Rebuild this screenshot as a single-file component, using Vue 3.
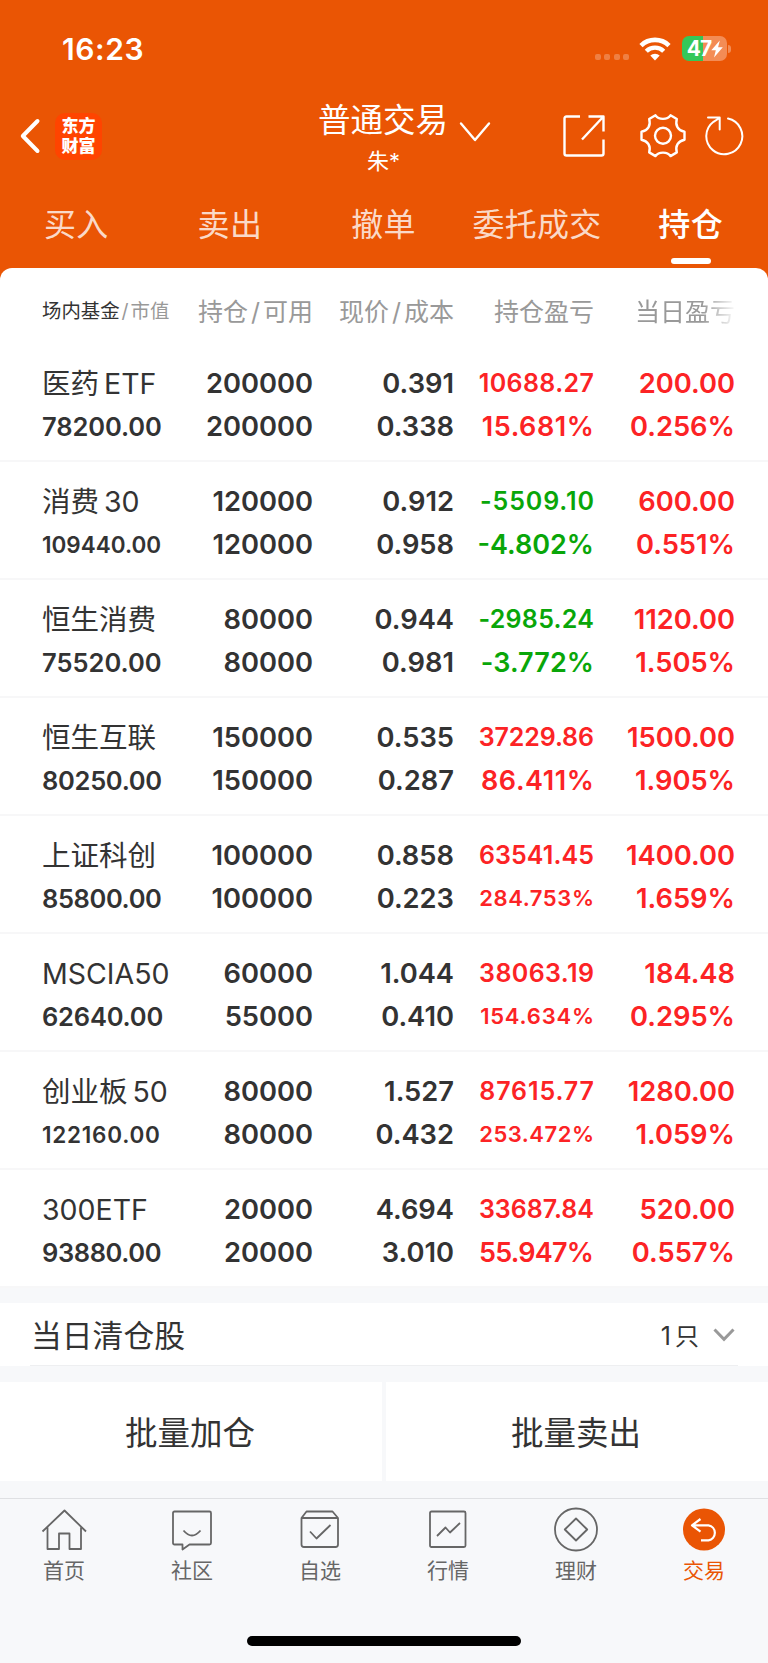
<template>
  <div class="pantalla">
    <header class="cabecera">
      <div class="estado">
        <span class="hora">16:23</span>
        <div class="indicadores">
          <div class="senal"><i v-for="n in 4" :key="n"></i></div>
          <svg class="wifi" width="32" height="24" viewBox="0 0 32 24">
            <path d="M2 8.6a20 20 0 0 1 28 0" fill="none" stroke="#fff" stroke-width="4.6" />
            <path d="M7.3 14.2a12.4 12.4 0 0 1 17.4 0" fill="none" stroke="#fff" stroke-width="4.4" />
            <path d="M11.3 18.6a6.6 6.6 0 0 1 9.4 0L16 23.4z" fill="#fff" />
          </svg>
          <div class="bateria">
            <span>47</span>
            <svg width="12" height="18" viewBox="0 0 12 18"><path d="M8.8 0.4 0.3 10.200h4.500L3 17.600 11.800 7.200H7.100z" fill="#fff" /></svg>
          </div>
          <i class="polo"></i>
        </div>
      </div>

      <div class="nav">
        <div class="nav-izq">
          <svg width="22" height="38" viewBox="0 0 22 38"><path d="M18.5 4 3.8 19l14.7 15" class="trazo grueso" /></svg>
          <div class="logo"><span>东方</span><span>财富</span></div>
        </div>
        <div class="titulo">
          <h1>普通交易</h1>
          <p>朱*</p>
        </div>
        <div class="nav-der">
          <svg class="flecha" width="32" height="22" viewBox="0 0 32 22"><path d="M2 2.5 16 19 30 2.5" class="trazo" /></svg>
          <svg class="ic-abrir" width="44" height="44" viewBox="0 0 44 44">
            <path d="M18 2.500H4.500Q2.500 2.500 2.500 4.500V39.500Q2.500 41.500 4.500 41.500H39.500Q41.500 41.500 41.500 39.500V25.500M26.500 2.500H41.500V17.500M41.500 2.500 20 25.500" class="trazo recto" />
          </svg>
          <svg class="ic-config" width="46" height="46" viewBox="0 0 46 46">
            <path d="M15.500 2.300C18.500 7 27.500 7 30.500 2.300L36.800 6C35 12.500 38 17.500 44.500 18.700V26.700C38 28 35 33 36.800 39.400L30.500 43.100C27.500 38.500 18.500 38.500 15.500 43.100L9.200 39.400C11 33 8 28 1.500 26.700V18.700C8 17.500 11 12.500 9.200 6Z" class="trazo" />
            <circle cx="23" cy="22.700" r="8" class="trazo" />
          </svg>
          <svg class="ic-recargar" width="40" height="42" viewBox="0 0 40 42">
            <path d="M24 3.600A18 18 0 1 1 9.500 6.800L15.500 3M4 2.600H15.700V14.500" class="trazo fino" />
          </svg>
        </div>
      </div>

      <nav class="pestanas">
        <a v-for="p in pestanas" :key="p" :class="{ activa: p === '持仓' }">{{ p }}</a>
      </nav>
    </header>

    <main class="panel">
      <div class="fila encabezado">
        <div class="col-nombre"><b>场内基金</b><em>/</em>市值</div>
        <div>持仓<em>/</em>可用</div>
        <div>现价<em>/</em>成本</div>
        <div>持仓盈亏</div>
        <div class="difuminado">当日盈亏</div>
      </div>

      <div class="fila posicion" v-for="p in posiciones" :key="p.nombre">
        <div class="col-nombre">
          <p class="nombre">{{ p.nombre }}<span v-if="p.sufijo" class="sufijo">{{ p.sufijo }}</span></p>
          <p :class="p.valor.length > 8 ? 'chico' : 'mediano'" :style="espaciado(p.ajuste[0])">{{ p.valor }}</p>
        </div>
        <div><p>{{ p.cantidad }}</p><p>{{ p.disponible }}</p></div>
        <div><p>{{ p.precio }}</p><p>{{ p.costo }}</p></div>
        <div :class="color(p.ganancia)">
          <p class="ganancia" :style="espaciado(p.ajuste[1])">{{ p.ganancia }}</p>
          <p :class="p.porcentaje.length > 7 ? 'mini' : 'grande'" :style="espaciado(p.ajuste[2])">{{ p.porcentaje }}</p>
        </div>
        <div class="sube"><p>{{ p.dia }}</p><p>{{ p.diaPorcentaje }}</p></div>
      </div>
    </main>

    <section class="liquidadas">
      <h2>当日清仓股</h2>
      <span>1<b>只</b></span>
      <svg width="24" height="16" viewBox="0 0 24 16"><path d="M2.500 2.500 12 12.300 21.500 2.500" /></svg>
    </section>

    <section class="acciones">
      <button>批量加仓</button>
      <button>批量卖出</button>
    </section>

    <footer class="menu">
      <a>
        <svg viewBox="0 0 48 48"><path d="M2.500 25.500 24.500 4.500 46 25.500M7.500 21.500V43H19V27.500H29.500V43H41V21.500" /></svg>
        首页
      </a>
      <a>
        <svg viewBox="0 0 48 48"><path d="M6.500 5.500H41.500Q43 5.500 43 7V37Q43 38.500 41.500 38.500H21.500L14.500 43.500V38.500H6.500Q5 38.500 5 37V7Q5 5.500 6.500 5.500ZM15.500 24.500Q24 34.500 32.500 24.500" /></svg>
        社区
      </a>
      <a>
        <svg viewBox="0 0 48 48"><path d="M5.500 12 10.500 5.500H36.500L42 12V38.500Q42 41 39.500 41H8Q5.500 41 5.500 38.500ZM5.500 12H42M14 25.500 20.500 32.500 34.500 19" /></svg>
        自选
      </a>
      <a>
        <svg viewBox="0 0 48 48"><path d="M7.500 5.500H40Q41.500 5.500 41.500 7V39.500Q41.500 41 40 41H7.500Q6 41 6 39.500V7Q6 5.500 7.500 5.500ZM13 30 21.500 21.500 26 26.500 36 17" /></svg>
        行情
      </a>
      <a>
        <svg viewBox="0 0 48 48"><circle cx="24" cy="23.500" r="21" /><path d="M24 12.500 35.200 23.500 24 34.500 12.800 23.500Z" /></svg>
        理财
      </a>
      <a class="actual">
        <svg viewBox="0 0 48 48"><circle cx="24" cy="23.500" r="21" /><path d="M20.500 13 12 19.300 20.500 25.600M12 19.300H28.500A7.600 7.600 0 0 1 28.500 34.300H21" /></svg>
        交易
      </a>
    </footer>
    <div class="barra-inicio"></div>
  </div>
</template>

<script setup>
const pestanas = ['买入', '卖出', '撤单', '委托成交', '持仓']

const posiciones = [
  { nombre: '医药', sufijo: 'ETF', valor: '78200.00', cantidad: '200000', disponible: '200000', precio: '0.391', costo: '0.338', ganancia: '10688.27', porcentaje: '15.681%', dia: '200.00', diaPorcentaje: '0.256%', ajuste: [-0.1, 0.4, 0.6] },
  { nombre: '消费', sufijo: '30', valor: '109440.00', cantidad: '120000', disponible: '120000', precio: '0.912', costo: '0.958', ganancia: '-5509.10', porcentaje: '-4.802%', dia: '600.00', diaPorcentaje: '0.551%', ajuste: [0, 0.9, 0] },
  { nombre: '恒生消费', valor: '75520.00', cantidad: '80000', disponible: '80000', precio: '0.944', costo: '0.981', ganancia: '-2985.24', porcentaje: '-3.772%', dia: '1120.00', diaPorcentaje: '1.505%', ajuste: [0, 0.3, 0.1] },
  { nombre: '恒生互联', valor: '80250.00', cantidad: '150000', disponible: '150000', precio: '0.535', costo: '0.287', ganancia: '37229.86', porcentaje: '86.411%', dia: '1500.00', diaPorcentaje: '1.905%', ajuste: [-0.3, -0.1, 0.6] },
  { nombre: '上证科创', valor: '85800.00', cantidad: '100000', disponible: '100000', precio: '0.858', costo: '0.223', ganancia: '63541.45', porcentaje: '284.753%', dia: '1400.00', diaPorcentaje: '1.659%', ajuste: [-0.4, 0.1, 0.6] },
  { nombre: 'MSCIA50', valor: '62640.00', cantidad: '60000', disponible: '55000', precio: '1.044', costo: '0.410', ganancia: '38063.19', porcentaje: '154.634%', dia: '184.48', diaPorcentaje: '0.295%', ajuste: [-0.2, 0.4, 0.8] },
  { nombre: '创业板', sufijo: '50', valor: '122160.00', cantidad: '80000', disponible: '80000', precio: '1.527', costo: '0.432', ganancia: '87615.77', porcentaje: '253.472%', dia: '1280.00', diaPorcentaje: '1.059%', ajuste: [0.75, 0.9, 0.5] },
  { nombre: '300ETF', valor: '93880.00', cantidad: '20000', disponible: '20000', precio: '4.694', costo: '3.010', ganancia: '33687.84', porcentaje: '55.947%', dia: '520.00', diaPorcentaje: '0.557%', ajuste: [-0.4, 0, -0.75] }
]

// rojo = ganancia, verde = pérdida
function color(valor) {
  return valor.startsWith('-') ? 'baja' : 'sube'
}

// el margen compensa el espacio que queda después del último carácter
function espaciado(px) {
  return { letterSpacing: px + 'px', marginRight: -px + 'px' }
}
</script>

<style>
body {
  margin: 0;
  background: #f7f8fa;
}
</style>

<style scoped>
.pantalla {
  width: 768px;
  height: 1663px;
  overflow: hidden;
  display: flex;
  flex-direction: column;
  background: #f7f8fa;
  color: #333;
  font-family: Inter, "Noto Sans CJK SC", sans-serif;
}

h1, h2, p {
  margin: 0;
  font-weight: 400;
}

svg {
  display: block;
  flex: none;
}

.cabecera {
  height: 280px;
  margin-bottom: -12px;
  flex: none;
  background: #ea5504;
  color: #fff;
}

.estado {
  height: 94px;
  box-sizing: border-box;
  padding: 30px 37px 0 62px;
  display: flex;
  justify-content: space-between;
}

.hora {
  font-size: 30px;
  line-height: 38px;
  font-weight: 600;
  letter-spacing: 0.6px;
}

.indicadores {
  height: 37px;
  display: flex;
  align-items: center;
}

.senal {
  display: flex;
  gap: 3.3px;
  margin: 17px 10px 0 0;
}

.senal i {
  width: 6px;
  height: 6px;
  border-radius: 2px;
  background: rgba(255, 255, 255, 0.25);
}

.wifi {
  margin-right: 11px;
}

.bateria {
  width: 45px;
  height: 25px;
  border-radius: 7px;
  display: flex;
  align-items: center;
  justify-content: center;
  background: linear-gradient(90deg, #34c759 21px, #f38c55 21px);
}

.bateria span {
  font-size: 21px;
  line-height: 25px;
  font-weight: 700;
  letter-spacing: -1px;
  margin-left: 1px;
}

.polo {
  width: 3px;
  height: 8px;
  margin-left: 1px;
  border-radius: 0 3px 3px 0;
  background: #f38c55;
}

.nav {
  height: 84px;
  display: grid;
  grid-template-columns: 1fr 130px 1fr;
}

.nav-izq, .nav-der {
  display: flex;
  align-items: center;
}

.nav-izq {
  padding-left: 19px;
  gap: 14px;
}

.trazo {
  fill: none;
  stroke: #fff;
  stroke-width: 2.4;
  stroke-linecap: round;
  stroke-linejoin: round;
}

.grueso {
  stroke-width: 4;
}

.recto {
  stroke-linecap: butt;
}

.fino {
  stroke-width: 2;
}

.logo {
  width: 47px;
  height: 47px;
  border-radius: 10px;
  background: #ff4400;
  display: flex;
  flex-direction: column;
  align-items: center;
  justify-content: center;
  font-size: 17px;
  line-height: 20.5px;
  font-weight: 900;
}

.titulo {
  text-align: center;
  white-space: nowrap;
}

.titulo h1 {
  font-size: 32.5px;
  line-height: 54px;
  margin-left: -2px;
}

.titulo p {
  font-size: 22px;
  line-height: 26px;
  margin-left: -1px;
}

.flecha {
  margin: -8px 0 0 10px;
}

.ic-abrir {
  margin-left: 71px;
}

.ic-config {
  margin-left: 34px;
}

.ic-recargar {
  margin-left: 18px;
}

.pestanas {
  display: flex;
}

.pestanas a {
  flex: 1;
  display: flex;
  flex-direction: column;
  align-items: center;
  font-size: 32px;
  line-height: 94px;
  height: 90px;
  margin-left: -1px;
  letter-spacing: 0.3px;
  white-space: nowrap;
  color: rgba(255, 255, 255, 0.8);
}

.pestanas .activa {
  color: #fff;
  font-weight: 500;
}

.activa::after {
  content: '';
  width: 40px;
  height: 6px;
  margin-top: -14px;
  border-radius: 3px;
  background: #fff;
}

.panel {
  flex: none;
  background: #fff;
  border-radius: 12px 12px 0 0;
}

.fila {
  display: grid;
  grid-template-columns: 130px 141px 141px 140px 141px;
  padding: 0 33px 0 42px;
  text-align: right;
  white-space: nowrap;
}

.col-nombre {
  text-align: left;
}

.encabezado {
  height: 76px;
  line-height: 88px;
  font-size: 25px;
  color: #999;
}

.encabezado .col-nombre {
  font-size: 19.4px;
  line-height: 86px;
}

.encabezado b {
  font-weight: 400;
  color: #333;
}

.encabezado em {
  font-style: normal;
  padding: 0 3px;
}

.encabezado .col-nombre em {
  padding: 0 2px;
}

.difuminado {
  -webkit-mask-image: linear-gradient(90deg, #000 108px, transparent 143px);
  mask-image: linear-gradient(90deg, #000 108px, transparent 143px);
}

.posicion {
  height: 118px;
  box-sizing: border-box;
  padding-top: 18px;
  border-bottom: 2px solid #f7f7f8;
  font-size: 27.3px;
  line-height: 43px;
  font-weight: 600;
}

.posicion p {
  font-weight: inherit;
}

.posicion .nombre {
  font-weight: 400;
  font-size: 28.5px;
}

.sufijo {
  margin-left: 5px;
}

.mediano {
  font-size: 25.5px;
}

.chico {
  font-size: 22.5px;
}

.ganancia {
  font-size: 25px;
}

.grande {
  font-size: 27px;
}

.mini {
  font-size: 22px;
}

.sube {
  color: #fc2325;
}

.baja {
  color: #09a609;
}

.liquidadas {
  flex: none;
  height: 63px;
  margin: 15px 0 16px;
  padding: 0 32px 0 31px;
  display: flex;
  align-items: center;
  background: linear-gradient(#eeeff1, #eeeff1) 30px 100% / 708px 1.5px no-repeat #fff;
}

.liquidadas h2 {
  flex: 1;
  font-size: 30.8px;
  line-height: 60px;
  padding-top: 2px;
}

.liquidadas span {
  font-size: 25px;
}

.liquidadas b {
  font-size: 24px;
  font-weight: 400;
  margin: 0 13px 0 4px;
}

.liquidadas path {
  fill: none;
  stroke: #999;
  stroke-width: 3;
}

.acciones {
  flex: none;
  height: 99px;
  display: flex;
  gap: 4px;
}

.acciones button {
  flex: 1;
  border: none;
  padding: 0 2px 2px 0;
  background: #fff;
  color: #333;
  font-family: inherit;
  font-size: 32.5px;
}

.menu {
  flex: none;
  height: 138px;
  margin-top: 17px;
  box-sizing: border-box;
  padding-top: 7px;
  border-top: 1px solid #dfe0e3;
  background: #f7f8fa;
  display: flex;
}

.menu a {
  flex: 1;
  display: flex;
  flex-direction: column;
  align-items: center;
  font-size: 21px;
  line-height: 34px;
  color: #666;
}

.menu svg {
  width: 48px;
  height: 48px;
  fill: none;
  stroke: #666;
  stroke-width: 1.8;
  stroke-linejoin: round;
}

.menu .actual {
  color: #ea5504;
}

.actual circle {
  fill: #ea5504;
  stroke: none;
}

.actual path {
  stroke: #fff;
  stroke-width: 2.2;
}

.barra-inicio {
  flex: none;
  align-self: center;
  width: 274px;
  height: 10px;
  border-radius: 5px;
  background: #000;
}
</style>
